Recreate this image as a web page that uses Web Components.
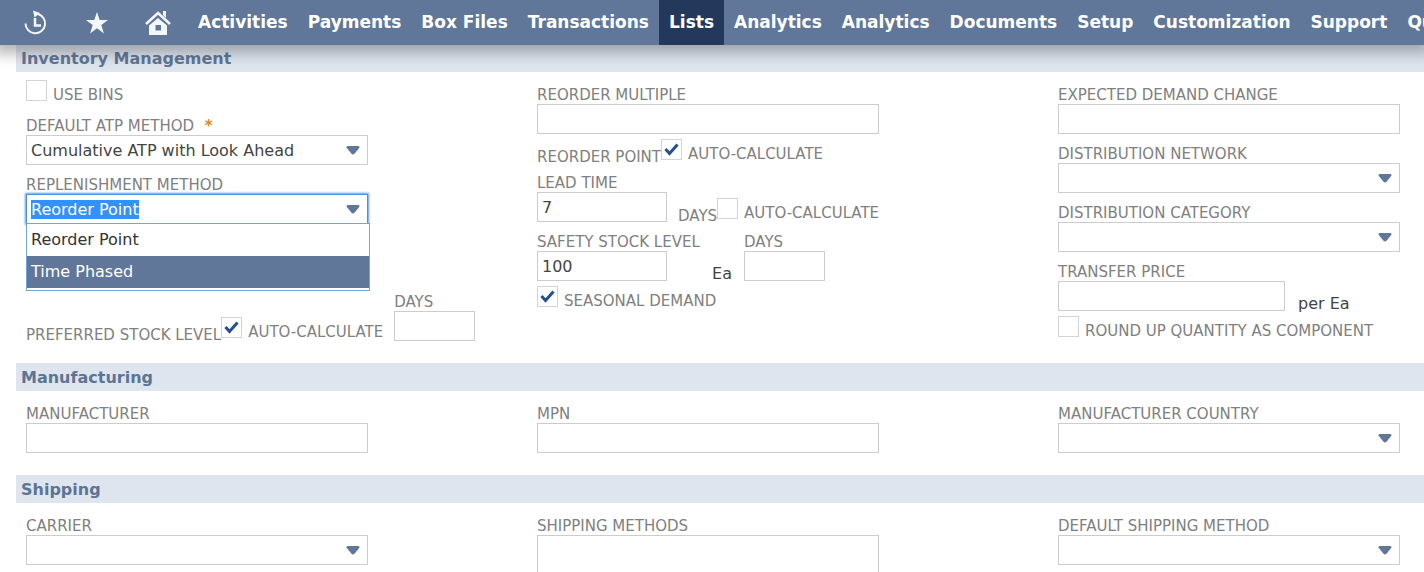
<!DOCTYPE html>
<html lang="en">
<head>
<meta charset="utf-8">
<title>Inventory Item</title>
<style>
	html, body { margin: 0; height: 100%; }
	body { background: #fff; font: 16px "DejaVu Sans", sans-serif; color: #444; overflow: hidden; }
	main { margin-top: -1px; padding-left: 16px; }
	.row { display: flex; align-items: flex-end; }
	.label { font: 15px/21px "DejaVu Sans", sans-serif; color: #808080; margin-bottom: -5px; white-space: nowrap; }
	.unit { line-height: 19px; margin: 0 0 -2px 13px; white-space: nowrap; }
	.unit.wide { width: 65px; margin: 0 12px -2px 0; text-align: right; }
	.days { margin-left: 11px; }
	.row erp-check { margin-bottom: 1px; }
	.tight { margin-top: -3px; }
	.first { margin-top: -3px; padding-bottom: 3px; }
	.below-menu { margin-top: 58px; }
</style>
</head>
<body>
<erp-navbar>
	<erp-tab>Activities</erp-tab>
	<erp-tab>Payments</erp-tab>
	<erp-tab>Box Files</erp-tab>
	<erp-tab>Transactions</erp-tab>
	<erp-tab current>Lists</erp-tab>
	<erp-tab>Analytics</erp-tab>
	<erp-tab>Analytics</erp-tab>
	<erp-tab>Documents</erp-tab>
	<erp-tab>Setup</erp-tab>
	<erp-tab>Customization</erp-tab>
	<erp-tab>Support</erp-tab>
	<erp-tab>Quality</erp-tab>
</erp-navbar>
<main>
	<erp-section heading="Inventory Management">
		<erp-column>
			<erp-check class="first" label="USE BINS"></erp-check>
			<erp-field type="select" label="DEFAULT ATP METHOD" required value="Cumulative ATP with Look Ahead"></erp-field>
			<erp-combo label="REPLENISHMENT METHOD" value="Reorder Point" options="Reorder Point|Time Phased" active="1"></erp-combo>
			<div class="row below-menu">
				<span class="label">PREFERRED STOCK LEVEL</span>
				<erp-check label="AUTO-CALCULATE" checked></erp-check>
				<erp-field class="days" label="DAYS" width="81"></erp-field>
			</div>
		</erp-column>
		<erp-column>
			<erp-field label="REORDER MULTIPLE"></erp-field>
			<div class="row tight">
				<span class="label">REORDER POINT</span>
				<erp-check label="AUTO-CALCULATE" checked></erp-check>
			</div>
			<div class="row">
				<erp-field label="LEAD TIME" value="7" width="130"></erp-field>
				<span class="label days">DAYS</span>
				<erp-check label="AUTO-CALCULATE"></erp-check>
			</div>
			<div class="row">
				<erp-field label="SAFETY STOCK LEVEL" value="100" width="130"></erp-field>
				<span class="unit wide">Ea</span>
				<erp-field label="DAYS" width="81"></erp-field>
			</div>
			<erp-check class="tight" label="SEASONAL DEMAND" checked></erp-check>
		</erp-column>
		<erp-column>
			<erp-field label="EXPECTED DEMAND CHANGE"></erp-field>
			<erp-field type="select" label="DISTRIBUTION NETWORK"></erp-field>
			<erp-field type="select" label="DISTRIBUTION CATEGORY"></erp-field>
			<div class="row">
				<erp-field label="TRANSFER PRICE" width="227"></erp-field>
				<span class="unit">per Ea</span>
			</div>
			<erp-check class="tight" label="ROUND UP QUANTITY AS COMPONENT"></erp-check>
		</erp-column>
	</erp-section>
	<erp-section heading="Manufacturing">
		<erp-column><erp-field label="MANUFACTURER"></erp-field></erp-column>
		<erp-column><erp-field label="MPN"></erp-field></erp-column>
		<erp-column><erp-field type="select" label="MANUFACTURER COUNTRY"></erp-field></erp-column>
	</erp-section>
	<erp-section heading="Shipping">
		<erp-column><erp-field type="select" label="CARRIER"></erp-field></erp-column>
		<erp-column><erp-field type="textarea" label="SHIPPING METHODS"></erp-field></erp-column>
		<erp-column><erp-field type="select" label="DEFAULT SHIPPING METHOD"></erp-field></erp-column>
	</erp-section>
</main>
<script>
// Shared by every element that draws a labelled box.
const FIELD_STYLE = `
	label { display: block; width: 0; padding-top: 4px; font: 15px/17px "DejaVu Sans", sans-serif; color: #808080; white-space: nowrap; }
	.required { margin-left: 6px; color: #d78b27; font-weight: bold; }
	.box { display: grid; }
	.box > * { grid-area: 1 / 1; }
	input, select, textarea {
		box-sizing: border-box; width: 100%; height: 30px; margin: 0; padding: 0 4px;
		border: 1px solid #ccc; border-radius: 0; background: #fff; color: #444;
		font: inherit; appearance: none; outline: none; resize: none;
	}
	textarea { height: 90px; }
	svg { place-self: center end; margin-right: 8px; pointer-events: none; }
`;
const ARROW = `<svg width="14" height="9" viewBox="0 0 14 9" aria-hidden="true"><path d="M2 0h10q2.200 .2 1.200 1.900L8.500 7.800q-1.500 1.200-3 0L.8 1.900Q-.2 .2 2 0z" fill="#607799"/></svg>`;

// <erp-navbar>
// Icon shortcuts, then the slotted tabs.
class ErpNavbar extends HTMLElement {
	connectedCallback() {
		this.attachShadow({mode: "open"}).innerHTML = `
			<style>
				:host { display: block; position: relative; z-index: 2; background: #607799; box-shadow: 0 1px 14px 7px rgba(80, 80, 85, .45); }
				nav { display: flex; height: 45px; padding-left: 5px; overflow: hidden; }
				a { display: flex; flex: none; width: 61px; align-items: center; justify-content: center; color: #f3f7fb; }
			</style>
			<nav>
				<a href="#recent" aria-label="Recent records"><svg width="24" height="26" viewBox="0 0 24 26" fill="none" stroke="currentColor" stroke-width="2"><path d="M14 4A9.800 9.800 0 1 1 1.500 13.500"/><path d="M9 .5L16 3l-5.500 4.500z" fill="currentColor" stroke="none"/><path d="M11 8v7.500H17" stroke-width="2.500"/></svg></a>
				<a href="#shortcuts" aria-label="Shortcuts"><svg width="24" height="24" viewBox="0 0 24 24" fill="currentColor"><path d="M12 1l2.700 8H23l-6.700 5.100L18.900 22.500 12 17.300 5.100 22.500l2.600-8.400L1 9h8.300z"/></svg></a>
				<a href="#home" aria-label="Home"><svg width="28" height="26" viewBox="0 0 28 26"><path d="M2 14L14 3l12 11" fill="none" stroke="currentColor" stroke-width="2.500"/><path d="M19 1h3v7l-3-3z" fill="currentColor"/><path d="M14 8l9 7.500V25H5v-9.500z" fill="currentColor"/><path d="M11.500 15h5.500v5.500h-5.500z" fill="#607799"/></svg></a>
				<slot></slot>
			</nav>`;
	}
}
customElements.define("erp-navbar", ErpNavbar);

// <erp-tab>
// Attributes:
//   current - optional: marks the open tab.
class ErpTab extends HTMLElement {
	connectedCallback() {
		this.attachShadow({mode: "open"}).innerHTML = `
			<style>
				:host { display: block; flex: none; }
				:host([current]) { background: #24385b; }
				a { display: block; padding: 0 10px; font: bold 17px/45px "DejaVu Sans", sans-serif; color: #fff; text-decoration: none; }
			</style>
			<a href="#tab"><slot></slot></a>`;
	}
}
customElements.define("erp-tab", ErpTab);

// <erp-section>
// Attributes:
//   heading - text of the bar above the columns.
class ErpSection extends HTMLElement {
	connectedCallback() {
		this.attachShadow({mode: "open"}).innerHTML = `
			<style>
				:host { display: block; }
				h2 { margin: 0; padding: 2px 0 0 5px; background: #dfe5ef; color: #5d7493; font: bold 16px/26px "DejaVu Sans", sans-serif; }
				.columns { display: grid; grid-template-columns: 511fr 521fr 366fr; padding: 11px 0 22px 10px; }
			</style>
			<h2>${this.getAttribute("heading")}</h2>
			<div class="columns"><slot></slot></div>`;
	}
}
customElements.define("erp-section", ErpSection);

class ErpColumn extends HTMLElement {
	connectedCallback() {
		this.attachShadow({mode: "open"}).innerHTML = `
			<style>:host { display: flex; flex-direction: column; gap: 8px; min-width: 0; }</style>
			<slot></slot>`;
	}
}
customElements.define("erp-column", ErpColumn);

// <erp-field>
// Attributes:
//   label    - caption above the box.
//   type     - optional: select or textarea, a text box by default.
//   value    - optional: current value.
//   width    - optional: box width in pixels.
//   required - optional: adds the star.
class ErpField extends HTMLElement {
	connectedCallback() {
		var width = this.getAttribute("width") || 342;
		var star = this.hasAttribute("required") ? `<span class="required">*</span>` : "";
		this.attachShadow({mode: "open"}).innerHTML = `
			<style>:host { display: block; width: ${width}px; } ${FIELD_STYLE}</style>
			<label for="control">${this.getAttribute("label")} ${star}</label>
			<div class="box">${this.getControl(this.getAttribute("type"), this.getAttribute("value") || "")}</div>`;
	}
	getControl(type, value) {
		if (type == "select") return `<select id="control"><option>${value}</option></select>${ARROW}`;
		if (type == "textarea") return `<textarea id="control">${value}</textarea>`;
		return `<input id="control" type="text" value="${value}">`;
	}
}
customElements.define("erp-field", ErpField);

// <erp-combo>
// Attributes:
//   label, value - as for erp-field.
//   options      - choices in the open menu, separated by "|".
//   active       - index of the highlighted choice.
class ErpCombo extends HTMLElement {
	connectedCallback() {
		var active = Number(this.getAttribute("active"));
		var items = this.getAttribute("options").split("|").map((option, i) =>
			`<li role="option" aria-selected="${i == active}">${option}</li>`).join("");
		var shadow = this.attachShadow({mode: "open"});
		shadow.innerHTML = `
			<style>
				:host { display: block; position: relative; width: 342px; }
				${FIELD_STYLE}
				input { border-color: #4b8fdd; box-shadow: 0 0 2px 1px #5a9ae0; }
				input::selection { background: #3390ff; color: #fff; }
				ul {
					position: absolute; top: 100%; left: 0; right: -2px; z-index: 1; margin: -1px 0 0; padding: 0 0 2px;
					border: 1px solid #6fa6e0; background: #fff; list-style: none;
				}
				li { padding: 0 4px; line-height: 32px; color: #333; }
				li[aria-selected="true"] { background: #607799; color: #fff; }
			</style>
			<label for="control">${this.getAttribute("label")}</label>
			<div class="box"><input id="control" type="text" role="combobox" aria-expanded="true" aria-controls="menu" value="${this.getAttribute("value")}">${ARROW}</div>
			<ul id="menu" role="listbox">${items}</ul>`;
		var input = shadow.getElementById("control");
		input.focus();
		input.select();
	}
}
customElements.define("erp-combo", ErpCombo);

// <erp-check>
// Attributes:
//   label   - text after the box.
//   checked - optional.
class ErpCheck extends HTMLElement {
	connectedCallback() {
		this.attachShadow({mode: "open"}).innerHTML = `
			<style>
				:host { display: block; height: 23px; }
				.line { display: flex; align-items: flex-start; gap: 6px; }
				.box { display: grid; }
				.box > * { grid-area: 1 / 1; }
				input { width: 21px; height: 21px; margin: 0; border: 1px solid #d4d4d4; background: #fff; appearance: none; }
				svg { place-self: center; visibility: hidden; pointer-events: none; }
				input:checked + svg { visibility: visible; }
				label { padding-top: 5px; font: 15px/21px "DejaVu Sans", sans-serif; color: #808080; white-space: nowrap; }
			</style>
			<div class="line">
				<span class="box">
					<input id="control" type="checkbox" ${this.hasAttribute("checked") ? "checked" : ""}>
					<svg width="15" height="13" viewBox="0 0 15 13"><path d="M1.500 6l4 4.500 8-9" fill="none" stroke="#24508f" stroke-width="3"/></svg>
				</span>
				<label for="control">${this.getAttribute("label")}</label>
			</div>`;
	}
}
customElements.define("erp-check", ErpCheck);
</script>
</body>
</html>
